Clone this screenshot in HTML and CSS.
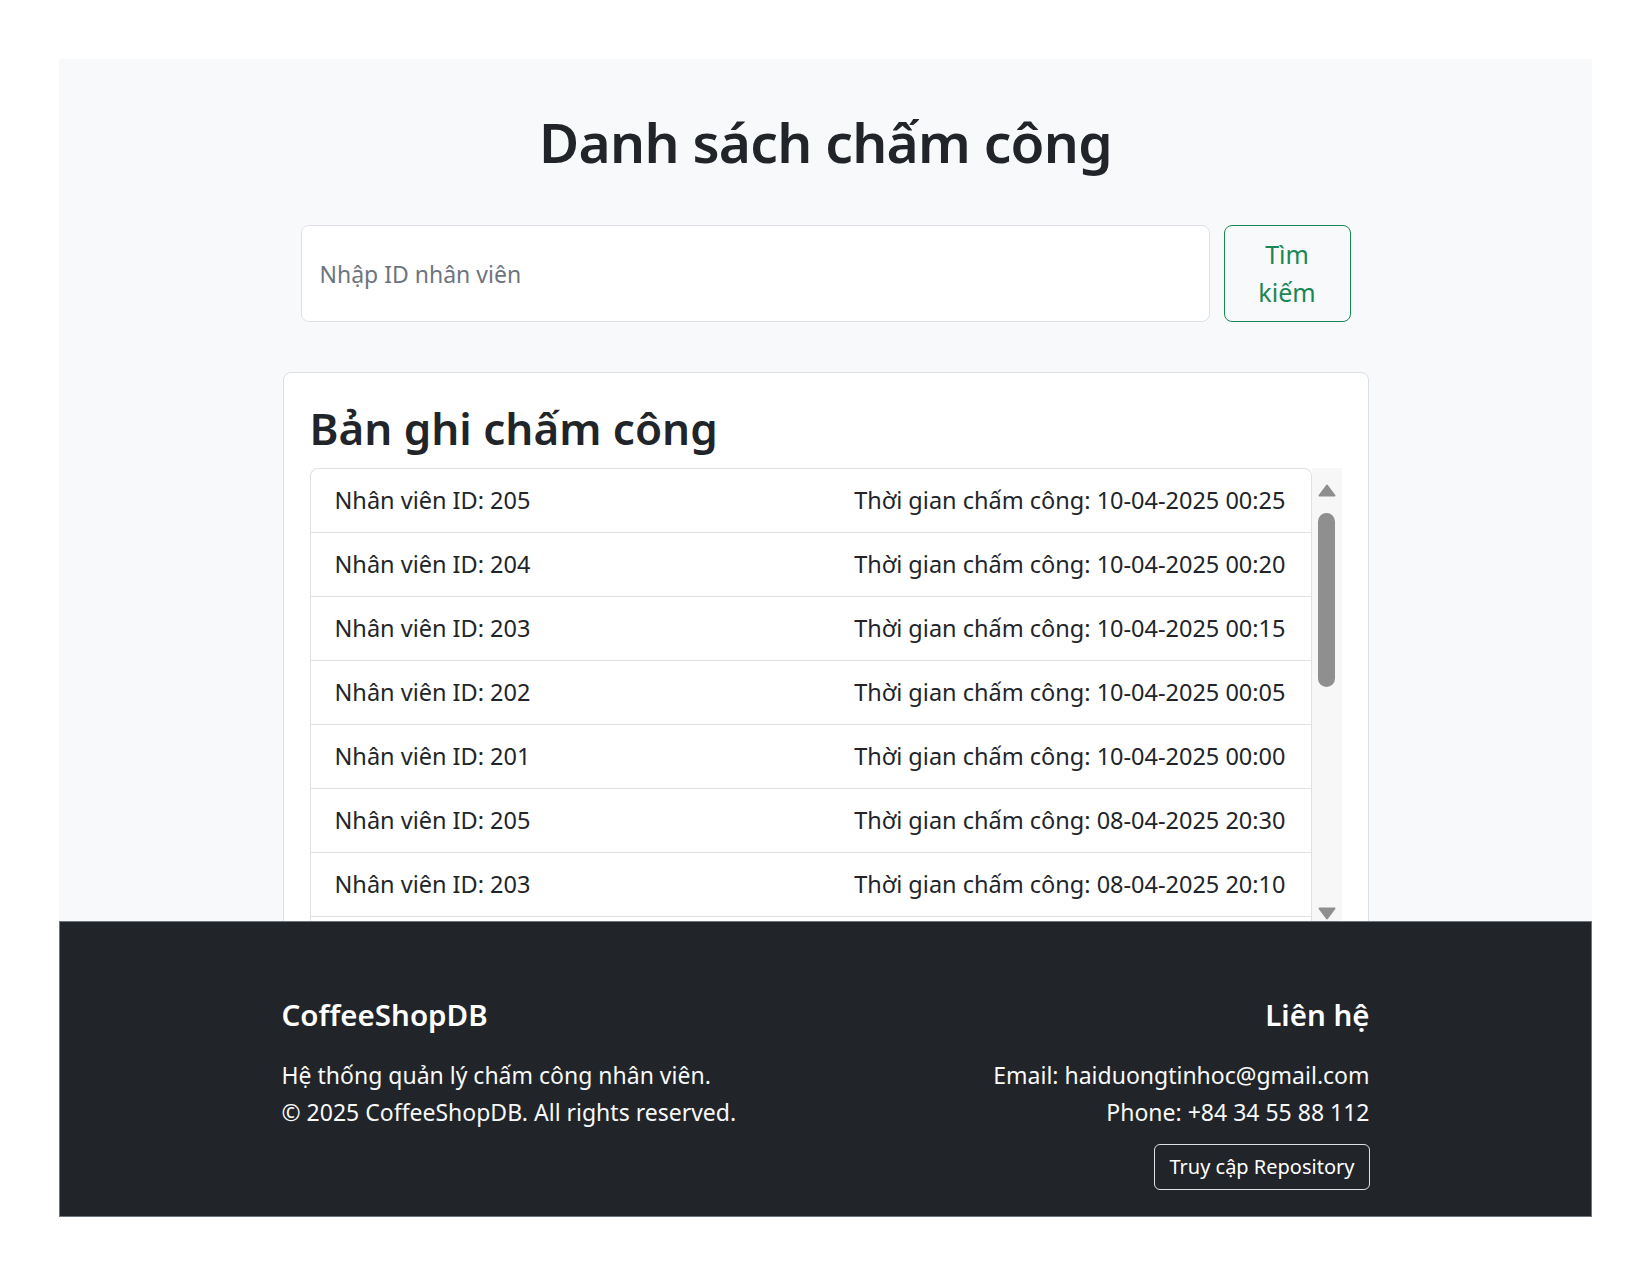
FILE: index.html
```html
<!DOCTYPE html>
<html lang="vi">
<head>
<meta charset="utf-8">
<title>Danh sách chấm công</title>
<link rel="stylesheet" href="styles.css">
</head>
<body>
<div class="page">
  <main class="main">
    <h1 class="title">Danh sách chấm công</h1>
    <div class="content">
      <form class="search">
        <input class="search-input" type="text" placeholder="Nhập ID nhân viên">
        <button class="search-btn" type="button">Tìm kiếm</button>
      </form>
      <section class="card">
        <h2 class="card-title">Bản ghi chấm công</h2>
        <div class="scroll">
          <ul class="list">
            <li class="row"><span>Nhân viên ID: 205</span><span>Thời gian chấm công: 10-04-2025 00:25</span></li>
            <li class="row"><span>Nhân viên ID: 204</span><span>Thời gian chấm công: 10-04-2025 00:20</span></li>
            <li class="row"><span>Nhân viên ID: 203</span><span>Thời gian chấm công: 10-04-2025 00:15</span></li>
            <li class="row"><span>Nhân viên ID: 202</span><span>Thời gian chấm công: 10-04-2025 00:05</span></li>
            <li class="row"><span>Nhân viên ID: 201</span><span>Thời gian chấm công: 10-04-2025 00:00</span></li>
            <li class="row"><span>Nhân viên ID: 205</span><span>Thời gian chấm công: 08-04-2025 20:30</span></li>
            <li class="row"><span>Nhân viên ID: 203</span><span>Thời gian chấm công: 08-04-2025 20:10</span></li>
          </ul>
          <div class="scrollbar">
            <svg class="arrow" width="18" height="13" viewBox="0 0 18 13"><path d="M9 1.5 L16.5 11.5 H1.5 Z" fill="#8f8f8f" stroke="#8f8f8f" stroke-width="2" stroke-linejoin="round"/></svg>
            <div class="thumb"></div>
            <div class="spacer"></div>
            <svg class="arrow" width="18" height="13" viewBox="0 0 18 13"><path d="M1.5 1.5 H16.5 L9 11.5 Z" fill="#8f8f8f" stroke="#8f8f8f" stroke-width="2" stroke-linejoin="round"/></svg>
          </div>
        </div>
      </section>
    </div>
  </main>
  <footer class="footer">
    <div class="footer-inner">
      <div class="footer-col">
        <h5 class="footer-title">CoffeeShopDB</h5>
        <p class="footer-text">Hệ thống quản lý chấm công nhân viên.<br>© 2025 CoffeeShopDB. All rights reserved.</p>
      </div>
      <div class="footer-col footer-right">
        <h5 class="footer-title">Liên hệ</h5>
        <p class="footer-text">Email: haiduongtinhoc@gmail.com<br>Phone: +84 34 55 88 112</p>
        <a class="repo-btn" href="#">Truy cập Repository</a>
      </div>
    </div>
  </footer>
</div>
</body>
</html>
```

FILE: styles.css
```css
* { box-sizing: border-box; }
html, body { margin: 0; padding: 0; background: #fff; }
body {
  font-family: "Noto Sans", "Open Sans", "Liberation Sans", sans-serif;
  color: #212529;
}
.page {
  margin: 59px 58px 58px 59px;
  height: 1158px;
  display: flex;
  flex-direction: column;
}
.main {
  flex: 1;
  min-height: 0;
  overflow: hidden;
  background: #f8f9fa;
  padding-top: 50px;
}
.title {
  margin: 0;
  text-align: center;
  font-size: 55px;
  font-weight: 600;
  letter-spacing: -0.7px;
  line-height: 1.2;
  color: #212529;
}
.content {
  width: 1086px;
  margin: 0 auto;
}
.search {
  display: flex;
  gap: 14px;
  margin: 50px 18px 0;
}
.search-input {
  flex: 1;
  min-width: 0;
  border: 1px solid #dee2e6;
  border-radius: 8px;
  background: #fff;
  padding: 0 18px;
  font-family: inherit;
  font-size: 23px;
  color: #212529;
  outline: none;
}
.search-input::placeholder { color: #6c757d; }
.search-btn {
  width: 127px;
  flex: none;
  border: 1.5px solid #198754;
  border-radius: 8px;
  background: transparent;
  color: #198754;
  font-family: inherit;
  font-size: 25px;
  line-height: 38px;
  padding: 9px 20px 10px;
  white-space: normal;
}
.card {
  margin-top: 50px;
  background: #fff;
  border: 1px solid #dcdfe3;
  border-radius: 8px;
  padding: 29px 26px 26px;
}
.card-title {
  margin: 0 0 13px;
  font-size: 44px;
  font-weight: 600;
  line-height: 1.2;
}
.scroll {
  display: flex;
  height: 453px;
}
.list {
  flex: 1;
  margin: 0;
  padding: 0;
  list-style: none;
  overflow: hidden;
  background: #fff;
  border: 1px solid #dee2e6;
  border-bottom: none;
  border-radius: 8px 8px 0 0;
}
.row {
  display: flex;
  justify-content: space-between;
  padding: 15px 25px 15px 24px;
  border-bottom: 1px solid #dee2e6;
  font-size: 23.5px;
  line-height: 33px;
}
.scrollbar {
  width: 30px;
  flex: none;
  background: #f7f7f7;
  display: flex;
  flex-direction: column;
  align-items: center;
  padding-top: 16px;
  padding-bottom: 1px;
}
.arrow { display: block; flex: none; }
.thumb {
  margin-top: 16px;
  width: 17px;
  height: 174px;
  border-radius: 9px;
  background: #8f8f8f;
}
.spacer { flex: 1; }
.footer {
  flex: none;
  background: #212529;
  border: 1px solid #6c757d;
  color: #fff;
  padding: 75px 0 26px;
}
.footer-inner {
  width: 1088px;
  margin: 0 auto;
  display: flex;
  justify-content: space-between;
}
.footer-right {
  text-align: right;
  display: flex;
  flex-direction: column;
  align-items: flex-end;
}
.footer-title {
  margin: 0 0 25px;
  font-size: 29.5px;
  font-weight: 600;
  line-height: 1.2;
}
.footer-text {
  margin: 0;
  font-size: 23px;
  line-height: 37px;
  color: #f8f9fa;
}
.repo-btn {
  margin-top: 13px;
  display: inline-block;
  border: 1.5px solid #dee2e6;
  border-radius: 6px;
  padding: 6px 14px;
  font-size: 20px;
  line-height: 32px;
  color: #fff;
  text-decoration: none;
}
```
